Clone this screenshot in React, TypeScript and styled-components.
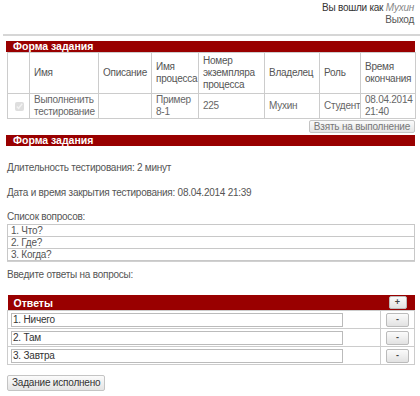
import React from 'react';
import styled, { createGlobalStyle } from 'styled-components';

const GlobalStyle = createGlobalStyle`
  html, body {
    margin: 0;
    padding: 0;
    background: #fff;
    overflow: hidden;
  }
  body {
    font-family: 'Liberation Sans', Arial, sans-serif;
    font-size: 10px;
    letter-spacing: -0.25px;
    color: #555;
  }
`;

const Page = styled.div`
  width: 420px;
  box-sizing: border-box;
  padding: 2px 5px 0 7px;
`;

const UserBar = styled.div`
  text-align: right;
  line-height: 12px;
  color: #333;
  padding-right: 1px;
`;

const UserName = styled.i`
  color: #888;
`;

const Logout = styled.span`
  color: #555;
`;

const Divider = styled.hr`
  margin: 8px -5px 5px -4px;
  border: 0;
  border-top: 2px solid #d6d6d6;
`;

const SectionTitle = styled.div`
  background: #990000;
  color: #fff;
  font-weight: bold;
  font-size: 10.5px;
  letter-spacing: 0;
  line-height: 11px;
  height: 11px;
  padding-left: 7px;
  margin-left: -1px;
`;

const TaskTable = styled.table`
  border-collapse: collapse;
  width: 100%;
  table-layout: fixed;
  line-height: 12px;
`;

const Cell = styled.td<{ $head?: boolean }>`
  border: 1px solid #ccc;
  padding: 0 2px 0 4px;
  height: ${(p) => (p.$head ? '40px' : '24px')};
  vertical-align: middle;
  white-space: nowrap;
  overflow: hidden;
  color: ${(p) => (p.$head ? '#555' : '#666')};
`;

const Check = styled.input`
  margin: 0 0 0 3px;
  width: 9px;
  height: 9px;
  vertical-align: middle;
  opacity: 0.7;
`;

const RightRow = styled.div`
  display: flex;
  justify-content: flex-end;
  margin: 1px 0 2px;
`;

const GrayButton = styled.button`
  font-family: 'Liberation Sans', Arial, sans-serif;
  font-size: 10px;
  letter-spacing: -0.2px;
  line-height: 10px;
  color: #777;
  padding: 0 4px;
  height: 13px;
  border: 1px solid #c4c4c4;
  border-radius: 2px;
  background: linear-gradient(#fbfbfb, #e4e4e4);
`;

const Info = styled.p<{ $gap: number }>`
  margin: ${(p) => p.$gap}px 0 0;
  line-height: 13px;
`;

const QuestionList = styled.div`
  border: 1px solid #d0d0d0;
  margin-top: 1px;
`;

const Question = styled.div`
  border: 1px solid #c8c8c8;
  margin: -1px -1px 0;
  height: 11px;
  line-height: 11px;
  padding: 0 0 0 3px;
  color: #555;

  &:first-child {
    margin-top: -1px;
  }
`;

const AnswersTable = styled.table`
  border-collapse: collapse;
  width: 100%;
  margin-top: 14px;
`;

const AnswersHead = styled.th<{ $center?: boolean }>`
  background: #990000;
  color: #fff;
  font-weight: bold;
  font-size: 10.5px;
  letter-spacing: 0;
  text-align: ${(p) => (p.$center ? 'center' : 'left')};
  padding: ${(p) => (p.$center ? '0' : '0 0 0 6px')};
  height: 15px;
  line-height: 12px;
`;

const AnswerCell = styled.td<{ $center?: boolean }>`
  border: 1px solid #ccc;
  padding: 0 0 0 ${(p) => (p.$center ? '0' : '3px')};
  text-align: ${(p) => (p.$center ? 'center' : 'left')};
  width: ${(p) => (p.$center ? '33px' : 'auto')};
  height: 17px;
`;

const AnswerInput = styled.input`
  display: block;
  font-family: 'Liberation Sans', Arial, sans-serif;
  font-size: 10px;
  letter-spacing: -0.2px;
  color: #333;
  width: 332px;
  height: 14px;
  box-sizing: border-box;
  border: 1px solid #bbb;
  padding: 0 1px;
  margin: 0;
`;

const SmallButton = styled.button<{ $wide?: boolean }>`
  width: ${(p) => (p.$wide ? '23px' : '18px')};
  height: ${(p) => (p.$wide ? '14px' : '13px')};
  padding: 0;
  font-family: 'Liberation Sans', Arial, sans-serif;
  font-size: 9px;
  font-weight: bold;
  line-height: 9px;
  color: #444;
  border: 1px solid #bbb;
  border-radius: 2px;
  background: linear-gradient(#fbfbfb, #e2e2e2);
  vertical-align: middle;
`;

const SubmitButton = styled(GrayButton)`
  height: 16px;
  color: #333;
  padding: 0 4px;
`;

const SubmitRow = styled.div`
  margin-top: 10px;
`;

const columns = [22, 69, 53, 47, 66, 55, 41, 55];

const questions = ['1. Что?', '2. Где?', '3. Когда?'];
const answers = ['1. Ничего', '2. Там', '3. Завтра'];

export default function App() {
  return (
    <Page>
      <GlobalStyle />
      <UserBar>
        Вы вошли как <UserName>Мухин</UserName>
        <br />
        <Logout>Выход</Logout>
      </UserBar>
      <Divider />

      <SectionTitle>Форма задания</SectionTitle>
      <TaskTable>
        <colgroup>
          {columns.map((w, i) => (
            <col key={i} style={{ width: w }} />
          ))}
        </colgroup>
        <tbody>
          <tr>
            <Cell $head />
            <Cell $head>Имя</Cell>
            <Cell $head>Описание</Cell>
            <Cell $head>
              Имя
              <br />
              процесса
            </Cell>
            <Cell $head>
              Номер
              <br />
              экземпляра
              <br />
              процесса
            </Cell>
            <Cell $head>Владелец</Cell>
            <Cell $head>Роль</Cell>
            <Cell $head>
              Время
              <br />
              окончания
            </Cell>
          </tr>
          <tr>
            <Cell>
              <Check type="checkbox" checked disabled readOnly />
            </Cell>
            <Cell>
              Выполненить
              <br />
              тестирование
            </Cell>
            <Cell />
            <Cell>
              Пример
              <br />
              8-1
            </Cell>
            <Cell>225</Cell>
            <Cell>Мухин</Cell>
            <Cell>Студент</Cell>
            <Cell>
              08.04.2014
              <br />
              21:40
            </Cell>
          </tr>
        </tbody>
      </TaskTable>
      <RightRow>
        <GrayButton>Взять на выполнение</GrayButton>
      </RightRow>

      <SectionTitle>Форма задания</SectionTitle>
      <Info $gap={15}>Длительность тестирования: 2 минут</Info>
      <Info $gap={12}>Дата и время закрытия тестирования: 08.04.2014 21:39</Info>
      <Info $gap={11}>Список вопросов:</Info>
      <QuestionList>
        {questions.map((q) => (
          <Question key={q}>{q}</Question>
        ))}
      </QuestionList>
      <Info $gap={6}>Введите ответы на вопросы:</Info>

      <AnswersTable>
        <thead>
          <tr>
            <AnswersHead>Ответы</AnswersHead>
            <AnswersHead $center>
              <SmallButton>+</SmallButton>
            </AnswersHead>
          </tr>
        </thead>
        <tbody>
          {answers.map((a) => (
            <tr key={a}>
              <AnswerCell>
                <AnswerInput defaultValue={a} />
              </AnswerCell>
              <AnswerCell $center>
                <SmallButton $wide>-</SmallButton>
              </AnswerCell>
            </tr>
          ))}
        </tbody>
      </AnswersTable>
      <SubmitRow>
        <SubmitButton>Задание исполнено</SubmitButton>
      </SubmitRow>
    </Page>
  );
}
